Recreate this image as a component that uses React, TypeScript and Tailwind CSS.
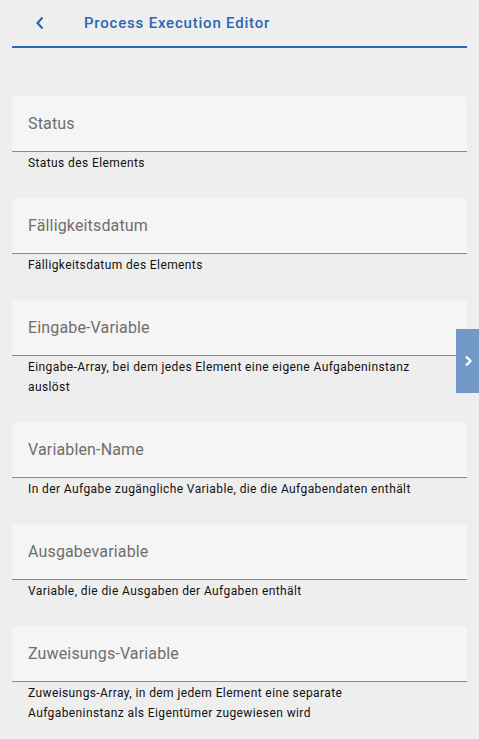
import React from "react";

interface FieldDef {
  label: string;
  hint: string;
}

const fields: FieldDef[] = [
  { label: "Status", hint: "Status des Elements" },
  { label: "Fälligkeitsdatum", hint: "Fälligkeitsdatum des Elements" },
  {
    label: "Eingabe-Variable",
    hint: "Eingabe-Array, bei dem jedes Element eine eigene Aufgabeninstanz auslöst",
  },
  {
    label: "Variablen-Name",
    hint: "In der Aufgabe zugängliche Variable, die die Aufgabendaten enthält",
  },
  { label: "Ausgabevariable", hint: "Variable, die die Ausgaben der Aufgaben enthält" },
  {
    label: "Zuweisungs-Variable",
    hint: "Zuweisungs-Array, in dem jedem Element eine separate Aufgabeninstanz als Eigentümer zugewiesen wird",
  },
];

function Field({ label, hint }: FieldDef) {
  return (
    <div className="mb-[25px]">
      <div className="h-[56px] bg-[#f5f5f5] rounded-t-[4px] border-b border-[#8c8c8c] flex items-center px-4 pt-[1px]">
        <span className="text-[16px] text-[#6e6e6e] tracking-[0.15px]">{label}</span>
      </div>
      <p className="pl-4 pr-[44px] pt-[1px] text-[12px] leading-[20px] text-[#111] tracking-[0.4px]">
        {hint}
      </p>
    </div>
  );
}

export default function App() {
  return (
    <div
      className="min-h-screen bg-[#eeeeee] relative"
      style={{ fontFamily: "Roboto, 'Noto Sans', sans-serif" }}
    >
      <header className="mx-3 h-[48px] border-b-2 border-[#2c66b2] flex items-center">
        <button className="w-[48px] h-[44px] pl-2 flex items-center justify-center text-[#2c66b2]">
          <svg width="12" height="14" viewBox="0 0 12 14" fill="none">
            <path d="M8.5 1.5L3.5 7l5 5.5" stroke="currentColor" strokeWidth="2.2" />
          </svg>
        </button>
        <h1 className="ml-6 text-[15px] font-medium tracking-[0.8px] text-[#2c66b2]">
          Process Execution Editor
        </h1>
      </header>

      <main className="px-3 pt-[48px]">
        {fields.map((f) => (
          <Field key={f.label} label={f.label} hint={f.hint} />
        ))}
      </main>

      <button className="absolute right-0 top-[329px] w-[23px] h-[64px] bg-[#7298c7] flex items-center justify-center text-white">
        <svg width="10" height="12" viewBox="0 0 10 12" fill="none">
          <path d="M3 1.5L7.5 6 3 10.5" stroke="currentColor" strokeWidth="2.2" />
        </svg>
      </button>
    </div>
  );
}
